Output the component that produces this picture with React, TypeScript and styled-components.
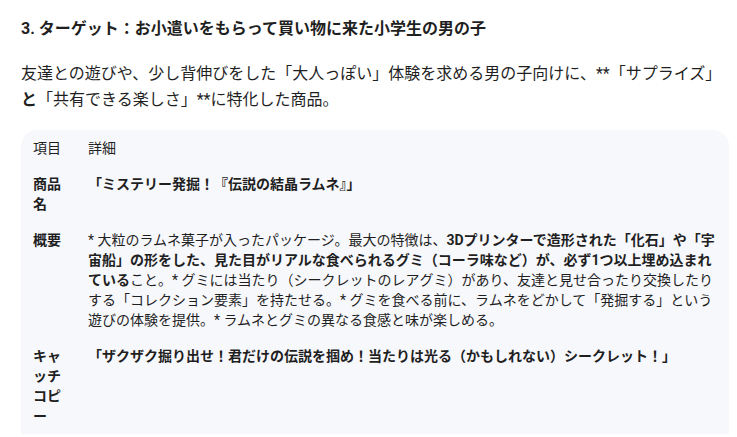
import React from "react";
import styled, { createGlobalStyle } from "styled-components";

const GlobalStyle = createGlobalStyle`
  html, body {
    margin: 0;
    padding: 0;
    background: #ffffff;
    overflow: hidden;
  }
  body {
    font-family: Roboto, "Noto Sans CJK JP", sans-serif;
    color: #1f1f1f;
  }
`;

const Page = styled.main`
  width: 708px;
  padding: 17px 8px 0 21px;
`;

const Heading = styled.h3`
  margin: 0;
  font-size: 16px;
  line-height: 24px;
  font-weight: 700;
`;

const Paragraph = styled.p`
  margin: 20px 0 0;
  font-size: 16px;
  line-height: 26px;
`;

const TableBox = styled.div`
  margin-top: 17px;
  background: #f7f8fc;
  border-radius: 16px 16px 0 0;
`;

const Row = styled.div<{ $head?: boolean }>`
  display: grid;
  grid-template-columns: 30px 1fr;
  column-gap: 25px;
  padding: 8px 12px;
  font-size: 14px;
  line-height: 20px;
  font-weight: ${(p) => (p.$head ? 400 : 700)};
`;

const Label = styled.div``;

const Detail = styled.div<{ $plain?: boolean }>`
  font-weight: ${(p) => (p.$plain ? 400 : 700)};

  b {
    font-weight: 700;
  }
`;

export default function App() {
  return (
    <>
      <GlobalStyle />
      <Page>
        <Heading>3. ターゲット：お小遣いをもらって買い物に来た小学生の男の子</Heading>
        <Paragraph>
          友達との遊びや、少し背伸びをした「大人っぽい」体験を求める男の子向けに、**「サプライズ」
          <b>と</b>「共有できる楽しさ」**に特化した商品。
        </Paragraph>
        <TableBox>
          <Row $head>
            <Label>項目</Label>
            <Detail $plain>詳細</Detail>
          </Row>
          <Row>
            <Label>商品名</Label>
            <Detail>「ミステリー発掘！『伝説の結晶ラムネ』」</Detail>
          </Row>
          <Row>
            <Label>概要</Label>
            <Detail $plain>
              * 大粒のラムネ菓子が入ったパッケージ。最大の特徴は、
              <b>
                3Dプリンターで造形された「化石」や「宇宙船」の形をした、見た目がリアルな食べられるグミ（コーラ味など）が、必ず1つ以上埋め込まれている
              </b>
              こと。* グミには当たり（シークレットのレアグミ）があり、友達と見せ合ったり交換したりする「コレクション要素」を持たせる。* グミを食べる前に、ラムネをどかして「発掘する」という遊びの体験を提供。* ラムネとグミの異なる食感と味が楽しめる。
            </Detail>
          </Row>
          <Row>
            <Label>キャッチコピー</Label>
            <Detail>
              「ザクザク掘り出せ！君だけの伝説を掴め！当たりは光る（かもしれない）シークレット！」
            </Detail>
          </Row>
        </TableBox>
      </Page>
    </>
  );
}
